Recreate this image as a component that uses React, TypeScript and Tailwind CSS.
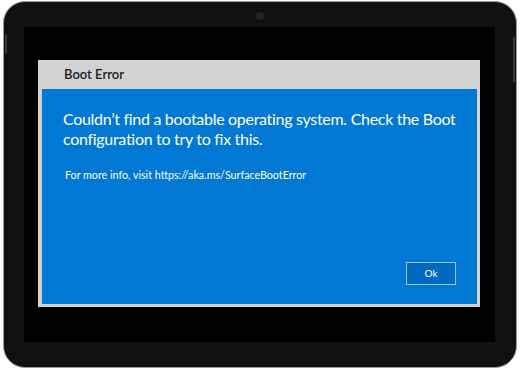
import React from 'react'

const font = { fontFamily: '"Segoe UI", Lato, "Noto Sans", sans-serif' }

const BootErrorDialog = () => {
  return (
    <div className="flex w-[442px] flex-col bg-[#d2d2d2] pr-[3px] pb-[3px] pl-[4px]">
      {/* title bar */}
      <div className="flex h-[29px] items-center pl-[22px] pt-[1px] text-[13px] font-semibold text-[#1c1c1c]">
        Boot Error
      </div>
      {/* body */}
      <div className="flex h-[215px] flex-col bg-[#0078d4] px-[21px] pt-[20px] pb-[19px] text-white">
        <p className="text-[16px] leading-[20px] tracking-[-0.3px]">
          <span className="whitespace-nowrap">Couldn’t find a bootable operating system. Check the Boot</span>
          <br />
          configuration to try to fix this.
        </p>
        <p className="mt-[18px] pl-[2px] text-[10.7px] leading-[16px]">
          For more info, visit https://aka.ms/SurfaceBootError
        </p>
        <div className="flex-1" />
        <div className="flex justify-end">
          <button className="flex h-[23px] w-[50px] items-center justify-center border border-[#9cc4ea] bg-[#0069c2] text-[10px] text-white">
            Ok
          </button>
        </div>
      </div>
    </div>
  )
}

export default function App() {
  return (
    <div className="h-[370px] w-[520px] bg-white pt-[1px] pl-[3px]" style={font}>
      <div className="relative h-[367px] w-[514px] rounded-[22px] border border-[#9a9a9a] bg-[#111111] pt-[25px] pr-[21px] pb-[25px] pl-[20px]">
        {/* camera */}
        <div className="absolute top-[10px] left-[252px] h-[8px] w-[8px] rounded-full bg-[#1c2626]" />
        {/* side buttons */}
        <div className="absolute top-[33px] left-[1px] h-[18px] w-[2px] bg-[#3c3c3c]" />
        <div className="absolute top-[35px] right-[1px] h-[45px] w-[2px] bg-[#3c3c3c]" />
        {/* screen */}
        <div className="flex h-full w-full items-start bg-black pt-[33px] pl-[14px]">
          <BootErrorDialog />
        </div>
      </div>
    </div>
  )
}
